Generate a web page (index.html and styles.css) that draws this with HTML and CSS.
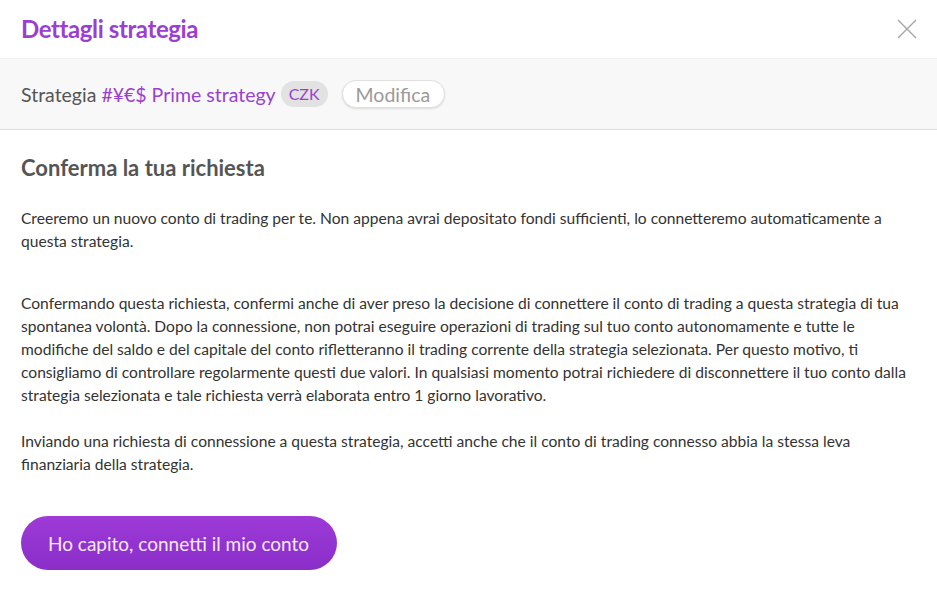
FILE: index.html
```html
<!DOCTYPE html>
<html lang="it">
<head>
  <meta charset="UTF-8">
  <meta name="viewport" content="width=device-width, initial-scale=1.0">
  <title>Dettagli strategia</title>
  <link rel="stylesheet" href="styles.css">
</head>
<body>
  <div class="modal">
    <header class="modal-header">
      <h1>Dettagli strategia</h1>
      <button class="close" aria-label="Chiudi">
        <svg width="20" height="20" viewBox="0 0 20 20">
          <path d="M1 1 L19 19 M19 1 L1 19" stroke="#a6a6a6" stroke-width="1.4" fill="none"/>
        </svg>
      </button>
    </header>
    <div class="strategy-bar">
      <span class="label">Strategia</span>
      <span class="name">#¥€$ Prime strategy</span>
      <span class="currency">CZK</span>
      <button class="edit">Modifica</button>
    </div>
    <main class="modal-body">
      <h2>Conferma la tua richiesta</h2>
      <p class="intro">Creeremo un nuovo conto di trading per te. Non appena avrai depositato fondi sufficienti, lo connetteremo automaticamente a questa strategia.</p>
      <p>Confermando questa richiesta, confermi anche di aver preso la decisione di connettere il conto di trading a questa strategia di tua spontanea volontà. Dopo la connessione, non potrai eseguire operazioni di trading sul tuo conto autonomamente e tutte le modifiche del saldo e del capitale del conto rifletteranno il trading corrente della strategia selezionata. Per questo motivo, ti consigliamo di controllare regolarmente questi due valori. In qualsiasi momento potrai richiedere di disconnettere il tuo conto dalla strategia selezionata e tale richiesta verrà elaborata entro 1 giorno lavorativo.</p>
      <p>Inviando una richiesta di connessione a questa strategia, accetti anche che il conto di trading connesso abbia la stessa leva finanziaria della strategia.</p>
      <button class="confirm">Ho capito, connetti il mio conto</button>
    </main>
  </div>
</body>
</html>
```

FILE: styles.css
```css
body {
  margin: 0;
  padding: 0;
  font-family: Lato, "Open Sans", Arial, sans-serif;
  background-color: #fff;
  color: #333;
}
.modal {
  width: 937px;
}
.modal-header {
  height: 58px;
  display: flex;
  align-items: center;
  justify-content: space-between;
  padding: 0 20px 0 21px;
  border-bottom: 1px solid #f0f0f0;
}
.modal-header h1 {
  margin: 0;
  font-size: 24px;
  font-weight: 700;
  letter-spacing: -0.4px;
  color: #9b3fd2;
  padding-bottom: 2px;
}
.close {
  background: none;
  border: none;
  padding: 0;
  width: 20px;
  height: 20px;
  cursor: pointer;
}
.strategy-bar {
  height: 70px;
  display: flex;
  align-items: center;
  padding: 0 21px;
  background-color: #f8f8f8;
  border-bottom: 1px solid #dcdcdc;
  font-size: 19.5px;
}
.strategy-bar .label {
  color: #555;
}
.strategy-bar .name {
  margin-left: 5px;
  color: #9a40cf;
}
.currency {
  margin-left: 5px;
  padding: 3px 8px;
  border-radius: 13px;
  background-color: #e2e2e2;
  color: #9a40cf;
  font-size: 16px;
  line-height: 20px;
}
.edit {
  margin-left: 14px;
  height: 28px;
  padding: 0 14px 0 13px;
  border: 1px solid #e0e0e0;
  border-radius: 14px;
  background-color: #fff;
  box-shadow: 0 1px 2px rgba(0, 0, 0, 0.12);
  font-family: inherit;
  font-size: 19.5px;
  color: #9a9a9a;
}
.modal-body {
  padding: 24px 21px 0;
}
.modal-body h2 {
  margin: 0 0 26px;
  font-size: 22px;
  font-weight: 700;
  color: #555;
}
.modal-body p {
  margin: 0 0 23px;
  font-size: 15.6px;
  line-height: 23px;
  color: #333;
}
.modal-body p.intro {
  margin-bottom: 39px;
}
.confirm {
  margin-top: 17px;
  height: 54px;
  padding: 0 28px 0 27px;
  border: none;
  border-radius: 27px;
  background: linear-gradient(180deg, #9d3ad8, #8a2ec8);
  color: #f6e8ff;
  font-family: inherit;
  font-size: 19px;
  cursor: pointer;
}
```
